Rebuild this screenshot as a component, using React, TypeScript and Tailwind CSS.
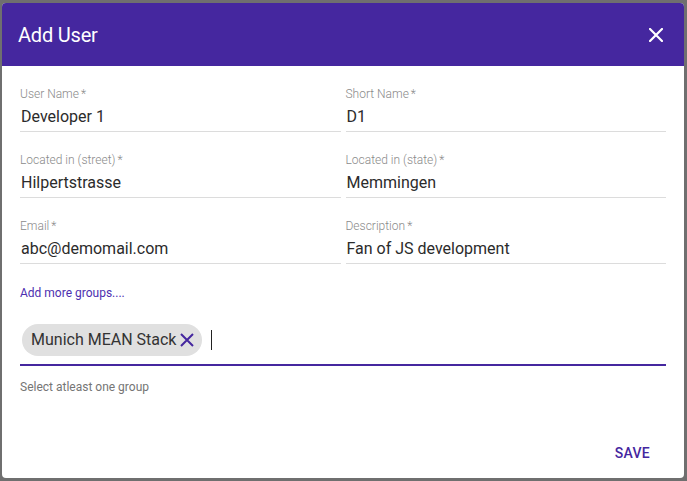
import React from "react";

function Field({ label, value }: { label: string; value: string }) {
  return (
    <div className="flex flex-col">
      <div className="text-[12px] leading-[14px] text-[#8a8a8a] font-light">
        {label}<span className="ml-[2px]">*</span>
      </div>
      <div className="mt-[6px] pl-[1px] text-[16px] leading-[20px] text-[#2b2b2b] pb-[4px] border-b border-[#dcdcdc]">
        {value}
      </div>
    </div>
  );
}

export default function App() {
  return (
    <div
      className="w-[687px] h-[481px] bg-[#6f6f6f] pl-[2px] pt-[3px] pr-[3px] pb-[3px]"
      style={{ fontFamily: "Roboto, 'Liberation Sans', sans-serif" }}
    >
      <div className="w-full h-full bg-white rounded-[4px] overflow-hidden flex flex-col">
        <div className="h-[63px] bg-[#45279f] flex items-center justify-between pl-[16px] pr-[21px]">
          <div className="text-white text-[20px] font-normal tracking-[-0.2px]">Add User</div>
          <svg width="14" height="14" viewBox="0 0 14 14">
            <path d="M1 1 L13 13 M13 1 L1 13" stroke="white" strokeWidth="2.2" strokeLinecap="square" />
          </svg>
        </div>
        <div className="flex-1 flex flex-col pl-[18px] pr-[18px] pt-[21px]">
          <div className="grid grid-cols-2 gap-x-[5px] gap-y-[21px]">
            <Field label="User Name" value="Developer 1" />
            <Field label="Short Name" value="D1" />
            <Field label="Located in (street)" value="Hilpertstrasse" />
            <Field label="Located in (state)" value="Memmingen" />
            <Field label="Email" value="abc@demomail.com" />
            <Field label="Description" value="Fan of JS development" />
          </div>
          <div className="mt-[22px] text-[12px] leading-[14px] text-[#4d2fb0]">Add more groups....</div>
          <div className="mt-[24px] flex items-center pb-[8px] border-b-2 border-[#45279f]">
            <div className="ml-[2px] h-[32px] rounded-full bg-[#e0e0e0] flex items-center pl-[9px] pr-[8px]">
              <span className="text-[16px] text-[#333]">Munich MEAN Stack</span>
              <svg width="14" height="14" viewBox="0 0 14 14" className="ml-[4px]">
                <path d="M1 1 L13 13 M13 1 L1 13" stroke="#45279f" strokeWidth="2" />
              </svg>
            </div>
            <div className="ml-[9px] w-[1px] h-[20px] bg-[#222]" />
          </div>
          <div className="mt-[14px] text-[12px] leading-[14px] text-[#757575]">Select atleast one group</div>
          <div className="flex-1" />
          <div className="flex justify-end pb-[14px] pr-[16px]">
            <div className="text-[14px] font-medium tracking-[0.3px] text-[#45279f]">SAVE</div>
          </div>
        </div>
      </div>
    </div>
  );
}
